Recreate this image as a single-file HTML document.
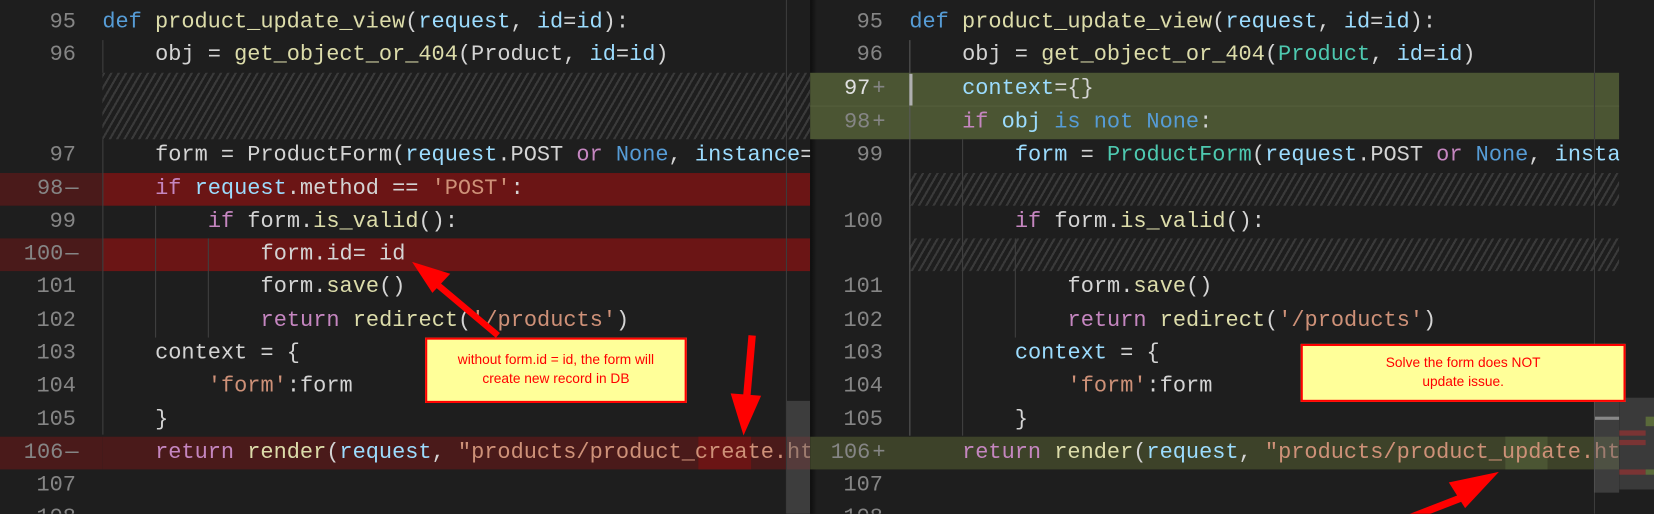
<!DOCTYPE html><html><head><style>
body{margin:0;width:1654px;height:513px;background:#1e1e1e;overflow:hidden;position:relative;font-family:"Liberation Mono",monospace;font-size:20.8px;color:#d4d4d4}
#w{position:absolute;left:0;top:0;width:1568px;height:487px;transform:scale(1.0549);transform-origin:0 0}
.p{position:absolute;top:0;height:487px;overflow:hidden}
.r{position:absolute;left:0;right:0;height:31.3px;line-height:31.3px;white-space:pre}
.n{position:absolute;width:72px;text-align:right;color:#858585}
.m{position:absolute;color:#858585}
.c{position:absolute}
.del{background:#6b1515}.delg{background:#4a1a1a}
.add{background:#4b5533}
.h{background:repeating-linear-gradient(-60deg,#1e1e1e 0 4px,#3a3a3a 4px 6px)}
.k{color:#569cd6}.f{color:#dcdcaa}.v{color:#9cdcfe}.i{color:#c586c0}.s{color:#ce9178}.t{color:#4ec9b0}
.g{position:absolute;width:1px;background:#404040}
.box{position:absolute;background:#ffff99;border:2px solid #f00;color:#f00;font-family:"Liberation Sans",sans-serif;font-size:13px;text-align:center;line-height:18px;box-sizing:border-box;padding-top:10px}
</style></head><body><div id="w">
<div class="p" style="left:0;width:768px">
<div class="r" style="top:6px"><span class="n" style="left:0">95</span><span class="c" style="left:97px"><span class="k">def</span> <span class="f">product_update_view</span>(<span class="v">request</span>, <span class="v">id</span>=<span class="v">id</span>):</span></div>
<div class="r" style="top:37.3px"><span class="n" style="left:0">96</span><span class="c" style="left:147px">obj = <span class="f">get_object_or_404</span>(Product, <span class="v">id</span>=<span class="v">id</span>)</span></div>
<div class="r h" style="top:69px;height:63px;left:97px"></div>
<div class="r" style="top:132px"><span class="n" style="left:0">97</span><span class="c" style="left:147px">form = ProductForm(<span class="v">request</span>.POST <span class="i">or</span> <span class="k">None</span>, <span class="v">instance</span>=</span></div>
<div class="r del" style="top:163.5px;left:97px"></div><div class="r delg" style="top:163.5px;width:97px"><span class="n" style="left:0;width:60px">98</span><span class="m" style="left:62px">—</span></div>
<div class="r" style="top:163.5px"><span class="c" style="left:147px"><span class="i">if</span> <span class="v">request</span>.method == <span class="s">'POST'</span>:</span></div>
<div class="r" style="top:194.8px"><span class="n" style="left:0">99</span><span class="c" style="left:197px"><span class="i">if</span> form.<span class="f">is_valid</span>():</span></div>
<div class="r del" style="top:226px;left:97px"></div><div class="r delg" style="top:226px;width:97px"><span class="n" style="left:0;width:60px">100</span><span class="m" style="left:62px">—</span></div>
<div class="r" style="top:226px"><span class="c" style="left:247px">form.id= id</span></div>
<div class="r" style="top:257.3px"><span class="n" style="left:0">101</span><span class="c" style="left:247px">form.<span class="f">save</span>()</span></div>
<div class="r" style="top:288.6px"><span class="n" style="left:0">102</span><span class="c" style="left:247px"><span class="i">return</span> <span class="f">redirect</span>(<span class="s">'/products'</span>)</span></div>
<div class="r" style="top:320px"><span class="n" style="left:0">103</span><span class="c" style="left:147px">context = {</span></div>
<div class="r" style="top:351.2px"><span class="n" style="left:0">104</span><span class="c" style="left:197px"><span class="s">'form'</span>:form</span></div>
<div class="r" style="top:382.5px"><span class="n" style="left:0">105</span><span class="c" style="left:147px">}</span></div>
<div class="r" style="top:413.8px;left:97px;background:#4a1a1a"></div><div style="position:absolute;top:413.8px;height:31.3px;left:662px;width:50px;background:#6b1515"></div><div class="r delg" style="top:413.8px;width:97px"><span class="n" style="left:0;width:60px">106</span><span class="m" style="left:62px">—</span></div>
<div class="r" style="top:413.8px"><span class="c" style="left:147px"><span class="i">return</span> <span class="f">render</span>(<span class="v">request</span>, <span class="s">"products/product_create.html"</span></span></div>
<div class="r" style="top:445px"><span class="n" style="left:0">107</span></div>
<div class="r" style="top:476.4px"><span class="n" style="left:0">108</span></div>
<div class="g" style="left:97px;top:38px;height:31px"></div><div class="g" style="left:97px;top:132px;height:280px"></div>
<div class="g" style="left:147px;top:195px;height:125px"></div><div class="g" style="left:197px;top:226px;height:94px"></div>
<div style="position:absolute;left:745px;top:0;width:1px;height:487px;background:#3c3c3c"></div>
<div style="position:absolute;left:746px;top:380px;width:22px;height:112px;background:rgba(100,100,100,0.45)"></div>
</div>
<div style="position:absolute;left:768px;top:0;width:6px;height:487px;background:linear-gradient(90deg,#0e0e0e,rgba(30,30,30,0))"></div>
<div class="p" style="left:765px;width:770px">
<div class="r" style="top:6px"><span class="n" style="left:0">95</span><span class="c" style="left:97px"><span class="k">def</span> <span class="f">product_update_view</span>(<span class="v">request</span>, <span class="v">id</span>=<span class="v">id</span>):</span></div>
<div class="r" style="top:37.3px"><span class="n" style="left:0">96</span><span class="c" style="left:147px">obj = <span class="f">get_object_or_404</span>(<span class="t">Product</span>, <span class="v">id</span>=<span class="v">id</span>)</span></div>
<div class="r add" style="top:68.7px;left:3px"><span class="n" style="left:0;width:57px;color:#e0e0e0">97</span><span class="m" style="left:59px">+</span><span class="c" style="left:144px"><span class="v">context</span>={}</span></div>
<div class="r add" style="top:100px;left:3px;border-top:1px solid #56603c"><span class="n" style="left:0;width:57px">98</span><span class="m" style="left:59px">+</span><span class="c" style="left:144px"><span class="i">if</span> <span class="v">obj</span> <span class="k">is not None</span>:</span></div>
<div class="r" style="top:132px"><span class="n" style="left:0">99</span><span class="c" style="left:197px"><span class="v">form</span> = <span class="t">ProductForm</span>(<span class="v">request</span>.POST <span class="i">or</span> <span class="k">None</span>, <span class="v">instance</span>=</span></div>
<div class="r h" style="top:163.5px;left:97px"></div>
<div class="r" style="top:194.8px"><span class="n" style="left:0">100</span><span class="c" style="left:197px"><span class="i">if</span> form.<span class="f">is_valid</span>():</span></div>
<div class="r h" style="top:226px;left:97px"></div>
<div class="r" style="top:257.3px"><span class="n" style="left:0">101</span><span class="c" style="left:247px">form.<span class="f">save</span>()</span></div>
<div class="r" style="top:288.6px"><span class="n" style="left:0">102</span><span class="c" style="left:247px"><span class="i">return</span> <span class="f">redirect</span>(<span class="s">'/products'</span>)</span></div>
<div class="r" style="top:320px"><span class="n" style="left:0">103</span><span class="c" style="left:197px"><span class="v">context</span> = {</span></div>
<div class="r" style="top:351.2px"><span class="n" style="left:0">104</span><span class="c" style="left:247px"><span class="s">'form'</span>:form</span></div>
<div class="r" style="top:382.5px"><span class="n" style="left:0">105</span><span class="c" style="left:197px">}</span></div>
<div class="r" style="top:413.8px;left:3px;background:#3d4229"></div><div style="position:absolute;top:413.8px;height:31.3px;left:662px;width:40px;background:#4b5533"></div>
<div class="r" style="top:413.8px"><span class="n" style="left:0;width:60px">106</span><span class="m" style="left:62px">+</span><span class="c" style="left:147px"><span class="i">return</span> <span class="f">render</span>(<span class="v">request</span>, <span class="s">"products/product_update.html"</span></span></div>
<div class="r" style="top:445px"><span class="n" style="left:0">107</span></div>
<div class="r" style="top:476.4px"><span class="n" style="left:0">108</span></div>
<div class="g" style="left:97px;top:38px;height:375px;background:#5a5a5a"></div>
<div style="position:absolute;left:97px;top:70px;width:3px;height:30px;background:#b0b0b0"></div>
<div class="g" style="left:147px;top:132px;height:281px"></div><div class="g" style="left:197px;top:226px;height:94px"></div>
</div>
<div style="position:absolute;left:1511px;top:0;width:1px;height:487px;background:#3c3c3c"></div>
<div style="position:absolute;left:1511px;top:380px;width:24px;height:87px;background:rgba(100,100,100,0.45)"></div>
<div style="position:absolute;left:1512px;top:395px;width:23px;height:3px;background:#888"></div>
<div style="position:absolute;left:1535px;top:0;width:33px;height:487px;background:#1e1e1e"></div>
<div style="position:absolute;left:1535px;top:377px;width:33px;height:87px;background:#3a3a3a"></div>
<div style="position:absolute;left:1535px;top:408px;width:25px;height:5px;background:#7a3434"></div>
<div style="position:absolute;left:1535px;top:417px;width:25px;height:5px;background:#7a3434"></div>
<div style="position:absolute;left:1535px;top:445px;width:25px;height:5px;background:#7a3434"></div>
<div style="position:absolute;left:1560px;top:395px;width:8px;height:9px;background:#5a6a3a"></div>
<div style="position:absolute;left:1560px;top:445px;width:8px;height:5px;background:#5a6a3a"></div>
<div class="box" style="left:403px;top:320px;width:248px;height:62px">without form.id = id, the form will<br>create new record in DB</div>
<div class="box" style="left:1233px;top:326px;width:308px;height:55px;padding-top:7px">Solve the form does NOT<br>update issue.</div>
<svg style="position:absolute;left:0;top:0" width="1568" height="487">
<g fill="#f00" stroke="#f00">
<line x1="472" y1="318" x2="410" y2="266" stroke-width="6"/>
<polygon points="393,250 425,260 410,276" stroke-width="2"/>
<line x1="713" y1="318" x2="708" y2="375" stroke-width="7"/>
<polygon points="694,374 720,376 705,410" stroke-width="2"/>
<line x1="1300" y1="505" x2="1385" y2="472" stroke-width="7"/>
<polygon points="1375,458 1418,449 1389,480" stroke-width="2"/>
</g></svg>
</div></body></html>
